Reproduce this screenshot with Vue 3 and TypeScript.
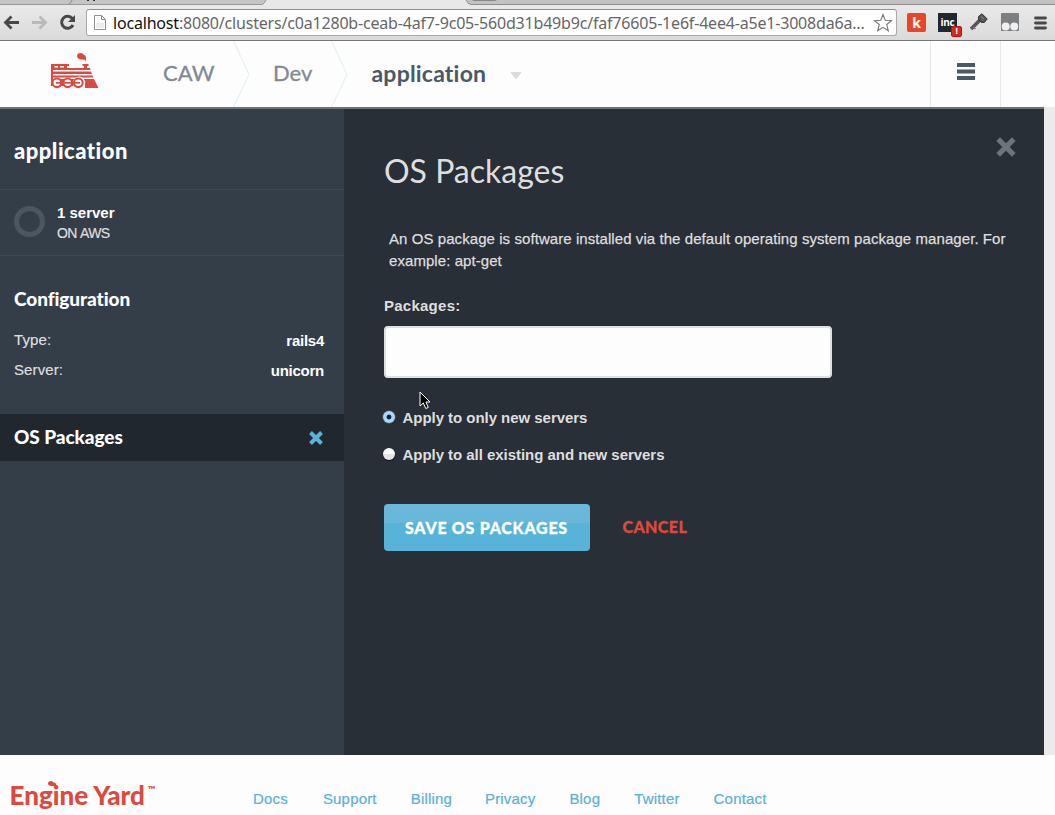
<script setup lang="ts">
import { ref } from 'vue'

const host = 'localhost'
const path = ':8080/clusters/c0a1280b-ceab-4af7-9c05-560d31b49b9c/faf76605-1e6f-4ee4-a5e1-3008da6a...'
const config = [
  { label: 'Type:', value: 'rails4' },
  { label: 'Server:', value: 'unicorn' },
]
const targets = [
  { id: 'new', label: 'Apply to only new servers' },
  { id: 'all', label: 'Apply to all existing and new servers' },
]
const links = ['Docs', 'Support', 'Billing', 'Privacy', 'Blog', 'Twitter', 'Contact']
const packages = ref('')
const target = ref('new')
</script>

<template>
  <div class="window">
    <svg class="tabs" width="1055" height="6" viewBox="0 0 1055 6">
      <rect width="1055" height="6" fill="#e8e8e8" />
      <path d="M0 0H266L263 4H0Z" fill="#c5c5c5" />
      <path d="M0 4.5H262Q264 4.5 266 0" fill="none" stroke="#999" />
      <path d="M72 0Q71 3 69 4" fill="none" stroke="#888" />
      <path d="M466 0Q468 4.5 471 4.5H1055V0Z" fill="#c2c2c2" />
      <path d="M466 0Q468 4.5 471 4.5H1055" fill="none" stroke="#8e8e8e" />
      <path d="M472 0H497L495 1H474Z" fill="#888" />
      <path d="M87 0h2v1h-2zM93 0h2v1h-2z" fill="#333" />
    </svg>
    <div class="toolbar">
      <svg class="nav-icons" width="86" height="34" viewBox="0 6 86 34" fill="none">
        <path d="M19 22.5H6M11.5 16.5L5.500 22.500L11.500 28.500" stroke="#484848" stroke-width="2.800" />
        <path d="M32 22.500H45M39.500 16.500L45.500 22.500L39.500 28.500" stroke="#b9b9b9" stroke-width="2.800" />
        <path d="M72.300 18.500A6 6 0 1 0 73 25" stroke="#484848" stroke-width="3" />
        <path d="M75 15V22H68Z" fill="#484848" />
      </svg>
      <div class="address">
        <svg class="page-icon" width="12" height="15" viewBox="0 0 12 15">
          <path d="M.5.5H7.500L11.500 4.500V14.500H.5Z" fill="#fff" stroke="#909090" />
          <path d="M7.500.5V4.500H11.500" fill="none" stroke="#909090" />
          <path d="M2 8H10V13H2Z" fill="#e9ecf2" />
        </svg>
        <span class="url"><b>{{ host }}</b>{{ path }}</span>
        <svg class="star" width="20" height="20" viewBox="0 0 20 20">
          <path d="M10 1.500L12.200 7.200L18.500 7.600L13.700 11.500L15.300 17.700L10 14.300L4.700 17.700L6.300 11.500L1.500 7.600L7.800 7.200Z" fill="#fff" stroke="#777" stroke-width="1.100" />
        </svg>
      </div>
      <div class="extensions">
        <span class="ext k">k</span>
        <span class="ext inc">inc<i>!</i></span>
        <svg class="key" width="18" height="18" viewBox="0 0 18 18">
          <path d="M1 16L10 7" stroke="#555" stroke-width="3.500" />
          <path d="M8.500 3.500L12 .8L17.200 6L14.300 9.500L11 9.300L8.700 6.900Z" fill="#555" stroke="#333" />
          <path d="M3 14L5.500 16M11 3.500L14 6.500" stroke="#777" stroke-width="1.500" />
        </svg>
        <svg class="faces" width="18" height="18" viewBox="0 0 18 18">
          <rect width="18" height="18" rx="1" fill="#7d8082" />
          <circle cx="4.700" cy="13.500" r="4" fill="#f0f0f0" /><circle cx="13.300" cy="13.500" r="4" fill="#f0f0f0" />
        </svg>
        <svg class="menu" width="13" height="14" viewBox="0 0 13 14">
          <path d="M1.500 2H11.500M1.500 7H11.500M1.500 12H11.500" stroke="#484848" stroke-width="2.800" stroke-linecap="round" />
        </svg>
      </div>
    </div>

    <header class="header">
      <svg class="engine" width="48" height="36" viewBox="0 0 48 36" fill="#dc4a3f">
        <path d="M26 3Q26 0 29.500 0Q32 0 33 2Q35 2 35 4.500V8.500Q34.500 6.500 32 6.500Q26.500 7 26 3Z" />
        <path d="M0 11H18V13H16V15H33V13H31.500V11H37.500V13H36V15H39L39.500 17H0Z" />
        <path d="M0 15H2V28H0ZM0 18.500H40L41 21H0ZM0 22.500H41.500L42.300 24.500H0ZM0 26H43L47.500 35H34V31H0Z" />
        <path d="M3.500 13H7V14.500H3.500ZM9 13H13V14.500H9Z" fill="#fff" />
        <path d="M0 26H28V33H0Z" />
        <circle cx="28" cy="29.800" r="6.200" fill="#fff" />
        <circle cx="6" cy="29.800" r="5.400" /><circle cx="16.700" cy="29.800" r="5.400" /><circle cx="27.300" cy="29.800" r="5.400" />
        <g fill="#fff">
          <circle cx="5.800" cy="29.800" r="3.300" /><circle cx="16.700" cy="29.800" r="3.300" /><circle cx="27.300" cy="29.800" r="3.300" />
        </g>
        <path d="M5 29H29V30.700H5Z" />
      </svg>
      <span class="crumb caw">CAW</span>
      <svg class="chevron" width="17" height="66" viewBox="0 0 17 66"><path d="M.5 0L16 33.500L.5 66" /></svg>
      <span class="crumb dev">Dev</span>
      <svg class="chevron" width="17" height="66" viewBox="0 0 17 66"><path d="M.5 0L16 33.500L.5 66" /></svg>
      <span class="crumb current">application</span>
      <svg class="caret" width="12" height="8" viewBox="0 0 12 8"><path d="M0 0H12L6 7.500Z" fill="#dcdcdc" /></svg>
      <div class="menu-cell">
        <svg width="18" height="17" viewBox="0 0 18 17"><path d="M0 2H18M0 8.500H18M0 15H18" stroke="#4b5866" stroke-width="4" /></svg>
      </div>
    </header>

    <div class="body">
      <aside class="sidebar">
        <h2>application</h2>
        <div class="server">
          <span class="ring"></span>
          <div><strong>1 server</strong><small>ON AWS</small></div>
        </div>
        <section class="config">
          <h3>Configuration</h3>
          <div v-for="row in config" :key="row.label" class="row">
            <span>{{ row.label }}</span><b>{{ row.value }}</b>
          </div>
        </section>
        <div class="active-item">
          <h3>OS Packages</h3>
          <svg width="14" height="14" viewBox="0 0 14 14"><path d="M1.500 1.500L12.500 12.500M12.500 1.500L1.500 12.500" stroke="#58b5d9" stroke-width="4" /></svg>
        </div>
      </aside>
      <main class="panel">
        <svg class="close" width="20" height="20" viewBox="0 0 20 20"><path d="M2.200 2.200L17.800 17.800M17.800 2.200L2.200 17.800" stroke="#6c757d" stroke-width="5.200" /></svg>
        <h1>OS Packages</h1>
        <p>An OS package is software installed via the default operating system package manager. For<br />example: apt-get</p>
        <label class="field-label" for="packages">Packages:</label>
        <input id="packages" v-model="packages" class="field" type="text" />
        <label v-for="t in targets" :key="t.id" class="option">
          <input v-model="target" type="radio" name="target" :value="t.id" />{{ t.label }}
        </label>
        <div class="actions">
          <button class="save">SAVE OS PACKAGES</button>
          <a class="cancel">CANCEL</a>
        </div>
        <svg class="cursor" width="13" height="19" viewBox="0 0 13 19"><path d="M1 1V15L4.300 12L6.800 17.500L9.300 16.400L6.900 11H11Z" fill="#000" stroke="#fff" stroke-width="1" /></svg>
      </main>
      <div class="gutter"></div>
    </div>

    <footer class="footer">
      <div class="brand">
        Engine Yard<sup>™</sup>
        <svg class="smoke" width="9" height="7" viewBox="0 0 9 7"><path d="M0 2.500Q0 0 3 0Q5 0 5.500 1.500Q9 1.500 8.500 7Q7.500 4.500 4 5Q0 5 0 2.500Z" fill="#dc4a3f" /></svg>
      </div>
      <nav><a v-for="l in links" :key="l">{{ l }}</a></nav>
    </footer>
  </div>
</template>

<style>
body { margin: 0; overflow: hidden; }
</style>

<style scoped>
* { box-sizing: border-box; }
h1, h2, h3, p { margin: 0; }
svg { display: block; flex: none; }
.window { width: 1055px; height: 815px; overflow: hidden; background: #fdfdfd; font-family: "Liberation Sans", Arial, sans-serif; font-size: 15px; white-space: nowrap; }
.toolbar { height: 35px; display: flex; background: linear-gradient(#e9e9e9, #dadada); border-bottom: 1px solid #777; }
.address { width: 811px; height: 27px; margin-top: 3px; padding: 0 3px 0 7px; display: flex; align-items: center; background: #fff; border: 1px solid #aaa; border-top-color: #909090; border-radius: 3px; }
.url { margin-left: 7px; flex: 1; font: 16px/24px "Noto Sans", sans-serif; letter-spacing: -.19px; color: #666; }
.url b { font-weight: 400; color: #111; }
.extensions { display: flex; margin: 7px 0 0 10px; }
.ext { width: 19px; height: 19px; border-radius: 2px; color: #fff; text-align: center; font-weight: 700; }
.k { background: #ea4529; font: 700 14px/19px "Open Sans", sans-serif; }
.inc { position: relative; margin-left: 12px; background: #20272e; border-radius: 0; font: 700 10px/19px "Open Sans", sans-serif; letter-spacing: -.3px; }
.inc i { position: absolute; left: 13px; top: 13px; width: 11px; height: 11px; background: #d02c20; border: 1px solid #a81b12; border-radius: 2px; font: 700 9px/9px "Liberation Sans", sans-serif; }
.key { margin-left: 13px; }
.faces { margin-left: 13px; }
.menu { margin: 3px 0 0 15px; }

.header { height: 68px; display: flex; border-bottom: 2px solid #6c7275; background: #fdfdfd; }
.engine { margin: 12px 0 0 51px; }
.crumb { font: 22px/64px Lato, sans-serif; color: #7f8a92; -webkit-text-stroke: .3px #7f8a92; }
.caw { width: 70px; margin-left: 64px; }
.dev { width: 58px; margin-left: 23px; }
.chevron path { fill: none; stroke: #dceef5; }
.current { width: 138px; margin-left: 23.500px; font-weight: 700; font-size: 23px; letter-spacing: .2px; color: #4b5866; -webkit-text-stroke: 0; }
.caret { margin-top: 31px; }
.menu-cell { width: 71px; height: 66px; margin-left: auto; margin-right: 54px; padding: 22px 0 0 26px; border: solid #e6e9ea; border-width: 0 1px; }

.body { height: 646px; display: flex; }
.sidebar { width: 344px; background: #343e48; color: #fff; }
.sidebar h2 { height: 81px; padding: 2px 0 0 14px; font: 900 22px/80px Lato, sans-serif; letter-spacing: .48px; border-bottom: 1px solid #3d4b54; }
.server { height: 66px; padding-left: 14px; display: flex; border-bottom: 1px solid #3d4b54; }
.ring { width: 31px; height: 31px; margin: 16px 12px 0 0; border: 5px solid #4b5661; border-radius: 50%; }
.server strong { display: block; margin-top: 13px; line-height: 20px; }
.server small { display: block; font-size: 14px; line-height: 20px; letter-spacing: -.7px; word-spacing: 1px; color: #dedede; -webkit-text-stroke: .2px #dedede; }
.config { height: 158px; padding: 28px 20px 0 14px; }
.sidebar h3 { font: 900 19px/30px Lato, sans-serif; letter-spacing: -.07px; }
.config .row { height: 30px; display: flex; justify-content: space-between; line-height: 30px; }
.config .row:nth-of-type(1) { margin-top: 11px; }
.row span { color: #dedede; letter-spacing: .1px; -webkit-text-stroke: .2px #dedede; }
.row b { padding-top: 1px; letter-spacing: -.25px; }
.active-item { height: 47px; padding: 0 21px 0 14px; display: flex; justify-content: space-between; align-items: center; background: #20272d; }
.active-item h3 { margin-top: -2px; }
.active-item svg { margin-top: 1px; }

.panel { position: relative; width: 700px; padding-left: 40px; background: #282f36; color: #dedede; }
.close { position: absolute; left: 652px; top: 28px; }
.panel h1 { padding-top: 42px; font: 400 32px/40px Lato, sans-serif; }
.panel p { margin: 37px 0 0 5px; line-height: 22px; letter-spacing: .07px; -webkit-text-stroke: .25px #dedede; }
.field-label { display: block; margin-top: 24px; font-weight: 700; line-height: 20px; letter-spacing: .25px; }
.field { display: block; width: 448px; height: 52px; margin: 10px 0 30px; padding: 0 12px; background: #fdfdfd; border: 2px solid #dfe0e1; border-radius: 4px; outline: 0; font-size: 15px; }
.option { display: flex; align-items: center; height: 20px; margin: 0 0 17px -1px; font-weight: 700; line-height: 20px; letter-spacing: -.04px; }
.option input { appearance: none; width: 12px; height: 12px; margin: -2px 7.500px 0 0; border-radius: 50%; background: linear-gradient(#fff 50%, #e4e4e4 50%); box-shadow: 0 1px 1px #111; }
.option input:checked { background: radial-gradient(circle, #0b2140 2px, transparent 2.800px), linear-gradient(#b4d6f3, #a2d8f8); box-shadow: 0 0 0 .5px #4a7dab; }
.actions { display: flex; align-items: center; margin-top: 39px; font-family: Lato, sans-serif; }
.save { width: 206px; height: 47px; padding: 0 1px 0 0; border: 0; border-radius: 4px; background: linear-gradient(#6ab9dc 0, #66b7da 40%, #58b3d8 42%); color: #fff; font: 900 16px/47px Lato, sans-serif; letter-spacing: .75px; -webkit-text-stroke: .3px #fff; }
.cancel { margin: -3px 0 0 32.500px; font-size: 16px; font-weight: 900; letter-spacing: .4px; color: #dc4a3f; -webkit-text-stroke: .3px #dc4a3f; }
.cursor { position: absolute; left: 75px; top: 282px; }
.gutter { width: 11px; margin-top: -2px; background: #ebebeb; }

.footer { display: flex; height: 60px; }
.brand { position: relative; width: 253px; padding-left: 9.500px; font: 900 26px/80px Lato, sans-serif; letter-spacing: -.02px; color: #dc4a3f; }
.brand sup { margin-left: 3px; font-size: 10px; line-height: 0; position: relative; top: -2px; }
.smoke { position: absolute; left: 48px; top: 26px; }
.footer nav { display: flex; gap: 34px; line-height: 87px; letter-spacing: .18px; color: #58b1d6; -webkit-text-stroke: .2px #58b1d6; }
.footer nav a:nth-child(2), .footer nav a:nth-child(3) { margin: 0 -1px 0 1px; }
</style>
